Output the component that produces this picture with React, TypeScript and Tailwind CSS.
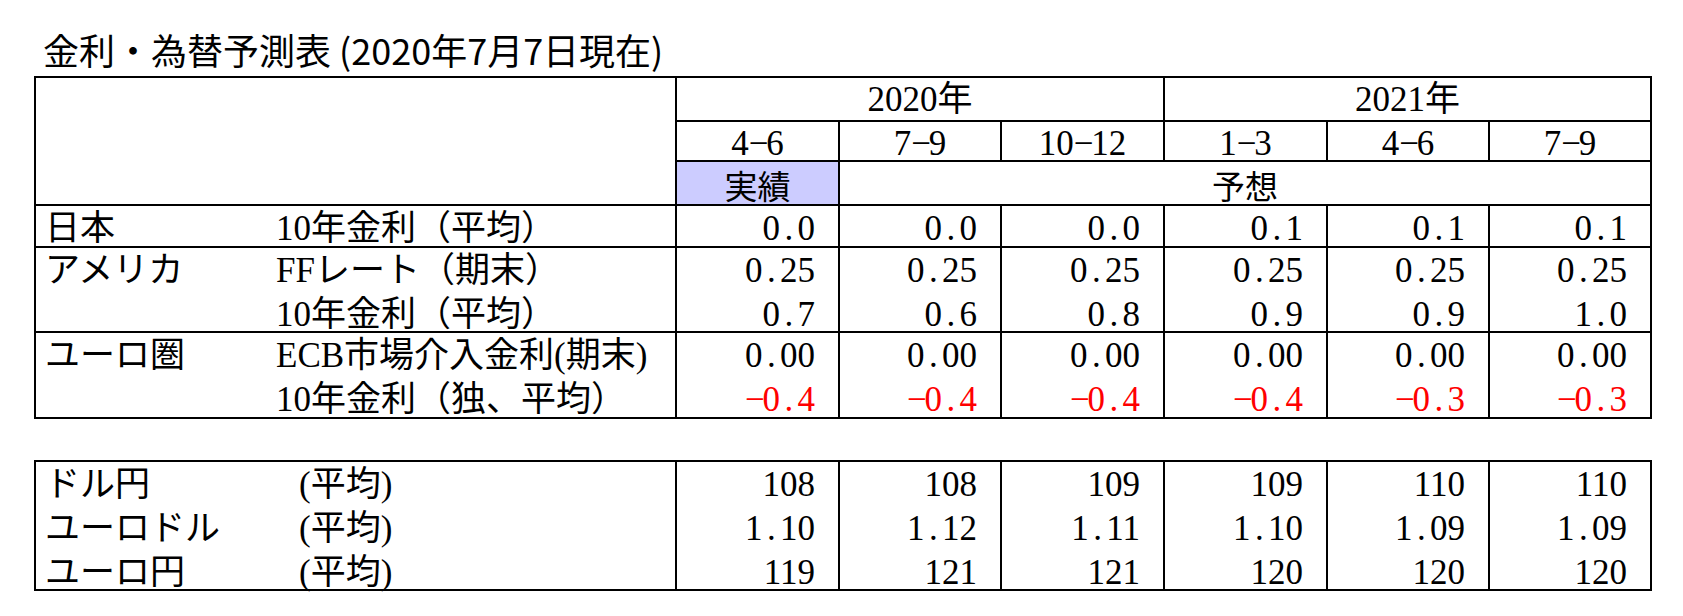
import React from 'react'

type Line = { label: string; values: string[] }
type Group = { region: string; lines: Line[] }

const quarters = ['4−6', '7−9', '10−12', '1−3', '4−6', '7−9']

const rates: Group[] = [
  {
    region: '日本',
    lines: [{ label: '10年金利（平均）', values: ['0.0', '0.0', '0.0', '0.1', '0.1', '0.1'] }],
  },
  {
    region: 'アメリカ',
    lines: [
      { label: 'FFレート（期末）', values: ['0.25', '0.25', '0.25', '0.25', '0.25', '0.25'] },
      { label: '10年金利（平均）', values: ['0.7', '0.6', '0.8', '0.9', '0.9', '1.0'] },
    ],
  },
  {
    region: 'ユーロ圏',
    lines: [
      { label: 'ECB市場介入金利(期末)', values: ['0.00', '0.00', '0.00', '0.00', '0.00', '0.00'] },
      { label: '10年金利（独、平均）', values: ['−0.4', '−0.4', '−0.4', '−0.4', '−0.3', '−0.3'] },
    ],
  },
]

const fx: Group[] = [
  { region: 'ドル円', lines: [{ label: '(平均)', values: ['108', '108', '109', '109', '110', '110'] }] },
  { region: 'ユーロドル', lines: [{ label: '(平均)', values: ['1.10', '1.12', '1.11', '1.10', '1.09', '1.09'] }] },
  { region: 'ユーロ円', lines: [{ label: '(平均)', values: ['119', '121', '121', '120', '120', '120'] }] },
]

// 半角等幅（明朝風）に見せるため、ピリオドとマイナスは 0.5em 幅に固定
function Num({ value }: { value: string }) {
  return (
    <>
      {value.split('').map((ch, i) =>
        ch === '.' || ch === '−' ? (
          <span key={i} className="inline-block w-[0.5em] text-center">
            {ch}
          </span>
        ) : (
          <span key={i}>{ch}</span>
        ),
      )}
    </>
  )
}

function LabelCell({ groups, colA }: { groups: Group[]; colA: string }) {
  return (
    <div className="bg-white pt-[1px] pl-[9px] whitespace-nowrap">
      {groups.map((g) =>
        g.lines.map((l, i) => (
          <div key={g.region + i} className="flex h-[44px] leading-[44px]">
            <span className={colA}>{i === 0 ? g.region : ''}</span>
            <span>{l.label}</span>
          </div>
        )),
      )}
    </div>
  )
}

function ValueCells({ groups }: { groups: Group[] }) {
  return (
    <>
      {quarters.map((_, col) => (
        <div key={col} className="bg-white pt-[1px] pr-[23px] text-right whitespace-nowrap">
          {groups.map((g) =>
            g.lines.map((l, i) => {
              const v = l.values[col]
              return (
                <div
                  key={g.region + i}
                  className={`h-[44px] leading-[44px] ${v.startsWith('−') ? 'text-[#ff0000]' : 'text-black'}`}
                >
                  <Num value={v} />
                </div>
              )
            }),
          )}
        </div>
      ))}
    </>
  )
}

export default function App() {
  return (
    <div className="w-[1683px] h-[616px] bg-white text-black overflow-hidden">
      <h1 className="pt-[31px] pl-[43px] text-[36px] leading-[36px] font-normal font-['Noto_Sans_CJK_JP',sans-serif] whitespace-nowrap">
        金利・為替予測表 (2020年7月7日現在)
      </h1>

      {/* ── 金利 ── */}
      <div className="mt-[9px] ml-[34px] w-[1618px] grid grid-cols-[639px_161px_160px_161px_161px_160px_160px] grid-rows-[42px_38px_42px_40px_83px_84px] gap-[2px] bg-black border-2 border-black font-['Liberation_Serif','Noto_Sans_CJK_JP',serif] text-[35px]">
        <div className="row-span-3 bg-white" />
        <div className="col-span-3 bg-white pt-[2px] leading-[40px] text-center">
          <Num value="2020" />年
        </div>
        <div className="col-span-3 bg-white pt-[2px] leading-[40px] text-center">
          <Num value="2021" />年
        </div>

        {quarters.map((q, i) => (
          <div key={i} className="bg-white pt-[2px] leading-[40px] text-center">
            <Num value={q} />
          </div>
        ))}

        <div className="bg-[#ccccff] pt-[2px] leading-[42px] text-center text-[33px] font-['Noto_Sans_CJK_JP',sans-serif]">
          実績
        </div>
        <div className="col-span-5 bg-white pt-[2px] leading-[42px] text-center text-[33px] font-['Noto_Sans_CJK_JP',sans-serif]">
          予想
        </div>

        {rates.map((g) => (
          <React.Fragment key={g.region}>
            <LabelCell groups={[g]} colA="w-[231px]" />
            <ValueCells groups={[g]} />
          </React.Fragment>
        ))}
      </div>

      {/* ── 為替 ── */}
      <div className="mt-[41px] ml-[34px] w-[1618px] grid grid-cols-[639px_161px_160px_161px_161px_160px_160px] grid-rows-[127px] gap-[2px] bg-black border-2 border-black font-['Liberation_Serif','Noto_Sans_CJK_JP',serif] text-[35px]">
        <LabelCell groups={fx} colA="w-[254px]" />
        <ValueCells groups={fx} />
      </div>
    </div>
  )
}
